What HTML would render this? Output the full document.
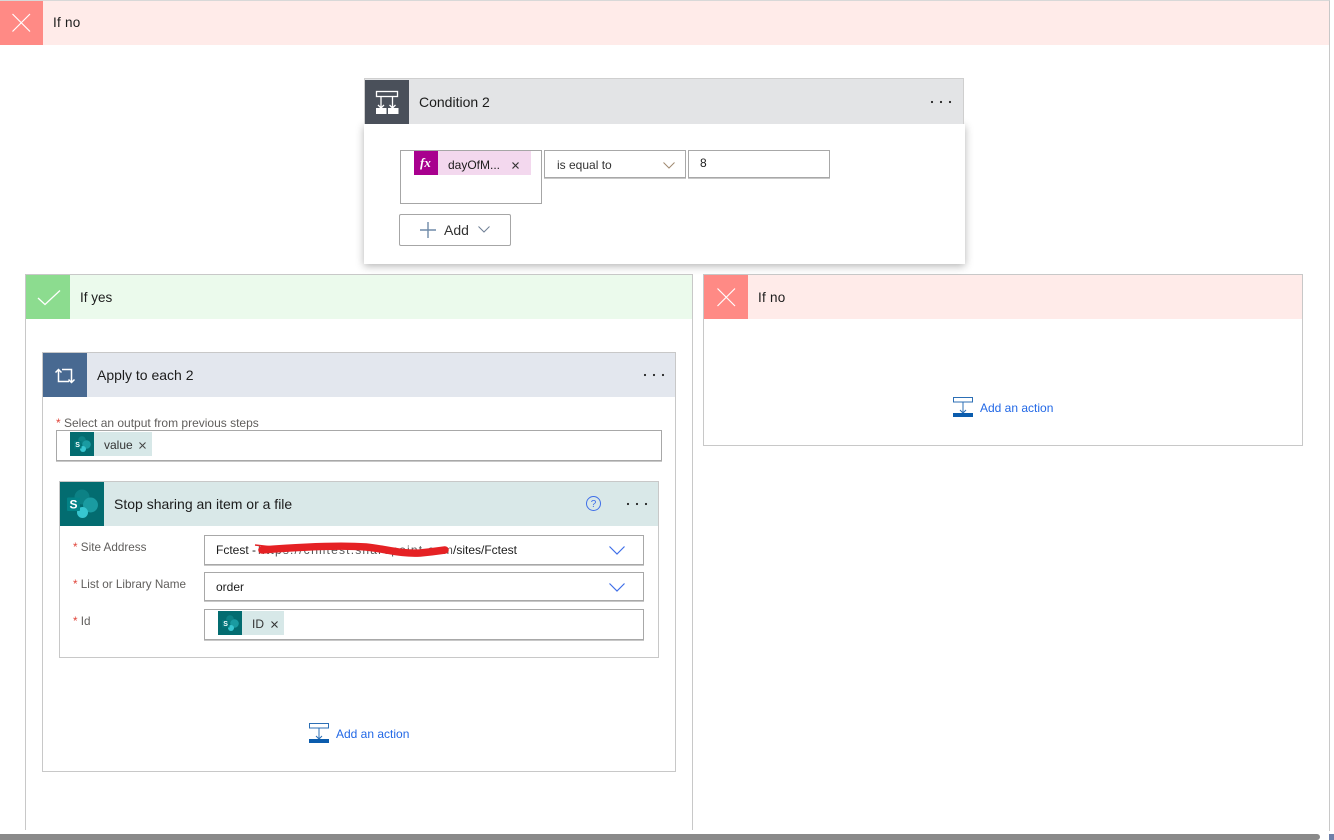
<!DOCTYPE html>
<html><head><meta charset="utf-8"><style>
html,body{margin:0;padding:0;width:1334px;height:840px;overflow:hidden;background:#fff;font-family:"Liberation Sans",sans-serif;color:#1c1c1c}
.a{position:absolute;box-sizing:border-box}
.t{position:absolute;white-space:nowrap;line-height:16px}
.b{position:absolute;box-sizing:border-box;border:1px solid #a8a8a8;box-shadow:0 1px 0 #c8c8c8;background:#fff}
.g{color:#605e5c;font-size:12px}
.h{font-size:11.7px}
.r{color:#e0453a}
.l{color:#2268e6;font-size:12px}
svg{position:absolute;overflow:visible}
</style></head><body>
<div class="a" style="left:0;top:0;width:1330px;height:831px;border-top:1px solid #d8d8d8;border-right:1px solid #c8c8c8"></div>
<div class="a" style="left:0;top:1px;width:1329px;height:44px;background:#ffebe9"></div>
<div class="a" style="left:0;top:1px;width:43px;height:44px;background:#ff8a85"></div>
<svg style="left:0;top:1px" width="43" height="44"><path d="M12.5 13L30 30.500M30 13L12.500 30.500" stroke="#fff" stroke-width="1.2" fill="none"/></svg>
<div class="t" style="left:53px;top:15px;font-size:13.5px;letter-spacing:.25px">If no</div>

<!-- Yes branch -->
<div class="a" style="left:25px;top:274px;width:668px;height:556px;border:1px solid #c8c8c8;border-bottom:0"></div>
<div class="a" style="left:26px;top:275px;width:666px;height:44px;background:#ebfaec"></div>
<div class="a" style="left:26px;top:275px;width:44px;height:44px;background:#8cdc8f"></div>
<svg style="left:26px;top:275px" width="44" height="44"><path d="M12 23L19 29.500L34 15.500" stroke="#fff" stroke-width="1.3" fill="none"/></svg>
<div class="t" style="left:80px;top:290px;font-size:13.5px">If yes</div>

<!-- No branch -->
<div class="a" style="left:703px;top:274px;width:600px;height:172px;border:1px solid #c8c8c8"></div>
<div class="a" style="left:704px;top:275px;width:598px;height:44px;background:#ffebe9"></div>
<div class="a" style="left:704px;top:275px;width:44px;height:44px;background:#ff8a85"></div>
<svg style="left:704px;top:275px" width="44" height="44"><path d="M13.5 13.500L31 31M31 13.500L13.500 31" stroke="#fff" stroke-width="1.2" fill="none"/></svg>
<div class="t" style="left:758px;top:290px;font-size:13.5px;letter-spacing:.25px">If no</div>
<svg style="left:953px;top:397px" width="21" height="21"><rect x=".5" y=".5" width="19" height="4.500" fill="none" stroke="#2c6fb5"/><path d="M10 5V16M7 13L10 16L13 13" stroke="#2c6fb5" fill="none"/><rect y="16" width="20" height="4" fill="#0b5cad"/></svg>
<div class="t l" style="left:980px;top:400px">Add an action</div>

<!-- Condition -->
<div class="a" style="left:364px;top:124px;width:601px;height:140px;background:#fff;box-shadow:0 2px 8px rgba(0,0,0,.3)"></div>
<div class="a" style="left:364px;top:78px;width:600px;height:46px;background:#e3e4e6;border:1px solid #cfcfcf;border-bottom:0"></div>
<div class="a" style="left:365px;top:80px;width:44px;height:44px;background:#4a505a"></div>
<svg style="left:365px;top:80px" width="44" height="44"><g stroke="#fff" fill="none" stroke-width="1.3"><rect x="11.500" y="11.500" width="21" height="5"/><path d="M16 17V28M13 25L16 28L19 25M27.500 17V28M24.500 25L27.500 28L30.500 25"/></g><rect x="11" y="28" width="10.500" height="6" fill="#fff"/><rect x="23" y="28" width="10.500" height="6" fill="#fff"/></svg>
<div class="t" style="left:419px;top:94px;font-size:14px">Condition 2</div>
<svg style="left:930px;top:100px" width="22" height="4"><circle cx="2" cy="2" r="1.1" fill="#222"/><circle cx="11" cy="2" r="1.1" fill="#222"/><circle cx="20" cy="2" r="1.1" fill="#222"/></svg>

<div class="a" style="left:400px;top:150px;width:142px;height:54px;border:1px solid #a6a6a6"></div>
<div class="a" style="left:414px;top:151px;width:117px;height:24px;background:#f3d8ee"></div>
<div class="a" style="left:414px;top:151px;width:24px;height:24px;background:#a8008e"></div>
<div class="t" style="left:420px;top:155px;font:italic bold 13px/16px 'Liberation Serif',serif;color:#fff">fx</div>
<div class="t" style="left:448px;top:157px;font-size:12px">dayOfM...</div>
<svg style="left:512px;top:162px" width="7" height="7"><path d="M.5.5L6.500 6.500M6.500.5L.5 6.500" stroke="#333" stroke-width="1.2"/></svg>
<div class="b" style="left:544px;top:150px;width:142px;height:28px"></div>
<div class="t" style="left:557px;top:157px;font-size:12px;color:#333">is equal to</div>
<svg style="left:663px;top:162px" width="12" height="7"><path d="M.5.5L6 6L11.500.5" stroke="#a08a70" fill="none"/></svg>
<div class="b" style="left:688px;top:150px;width:142px;height:28px"></div>
<div class="t" style="left:700px;top:155px;font-size:12px">8</div>
<div class="a" style="left:399px;top:214px;width:112px;height:32px;border:1px solid #a6a6a6;border-radius:2px;background:#fff"></div>
<svg style="left:420px;top:222px" width="16" height="16"><path d="M8 0V16M0 8H16" stroke="#6f8aa8" stroke-width="1.4"/></svg>
<div class="t" style="left:444px;top:222px;font-size:14px;color:#333">Add</div>
<svg style="left:478px;top:226px" width="12" height="7"><path d="M.5.5L6 6L11.500.5" stroke="#6f7f95" fill="none"/></svg>

<!-- Apply to each -->
<div class="a" style="left:42px;top:352px;width:634px;height:420px;border:1px solid #c8c8c8;background:#fff"></div>
<div class="a" style="left:43px;top:353px;width:632px;height:44px;background:#e3e7ee"></div>
<div class="a" style="left:43px;top:353px;width:44px;height:44px;background:#486991"></div>
<svg style="left:43px;top:353px" width="44" height="44"><path d="M15.500 16.500V28.500H26M12.500 19.500L15.500 16.500L18.500 19.500M19 16.500H28.500V29.500M25.500 26.500L28.500 29.500L31.500 26.500" stroke="#fff" stroke-width="1.5" fill="none"/></svg>
<div class="t" style="left:97px;top:367px;font-size:14px">Apply to each 2</div>
<svg style="left:643px;top:373px" width="22" height="4"><circle cx="2" cy="2" r="1.1" fill="#222"/><circle cx="11" cy="2" r="1.1" fill="#222"/><circle cx="20" cy="2" r="1.1" fill="#222"/></svg>
<div class="t g" style="left:56px;top:415px"><span class="r">*</span>&nbsp;Select an output from previous steps</div>
<div class="b" style="left:56px;top:430px;width:606px;height:31px"></div>
<div class="a" style="left:70px;top:432px;width:82px;height:24px;background:#d7e8e8"></div>
<div class="a" style="left:70px;top:432px;width:24px;height:24px;background:#036c70"></div>
<svg style="left:70px;top:432px" width="24" height="24"><circle cx="12" cy="8" r="3.800" fill="#0c8185"/><circle cx="16.500" cy="12.500" r="4.300" fill="#1a9ba1"/><circle cx="13" cy="17" r="3" fill="#37c6d0"/><rect x="4" y="9" width="7.500" height="7.500" fill="#03787c"/><text x="5.200" y="15" font-size="7" font-weight="700" fill="#fff" font-family="Liberation Sans">S</text></svg>
<div class="t" style="left:104px;top:437px;font-size:12px;color:#333">value</div>
<svg style="left:139px;top:442px" width="7" height="7"><path d="M.5.5L6.500 6.500M6.500.5L.5 6.500" stroke="#444"/></svg>

<!-- Stop sharing -->
<div class="a" style="left:59px;top:481px;width:600px;height:177px;border:1px solid #c8c8c8;background:#fff"></div>
<div class="a" style="left:60px;top:482px;width:598px;height:44px;background:#d9e8e8"></div>
<div class="a" style="left:60px;top:482px;width:44px;height:44px;background:#036c70"></div>
<svg style="left:60px;top:482px" width="44" height="44"><circle cx="22" cy="15" r="7.500" fill="#0c8185"/><circle cx="30.500" cy="23" r="7.500" fill="#1a9ba1"/><circle cx="22.500" cy="30.500" r="5.500" fill="#37c6d0"/><rect x="7" y="15.500" width="13" height="13.500" rx="1" fill="#038387"/><text x="9.500" y="26.500" font-size="12" font-weight="700" fill="#fff" font-family="Liberation Sans">S</text></svg>
<div class="t" style="left:114px;top:496px;font-size:14px">Stop sharing an item or a file</div>
<svg style="left:586px;top:496px" width="15" height="15"><circle cx="7.500" cy="7.500" r="7" fill="none" stroke="#3f6fe8" stroke-width="1"/><text x="7.500" y="11" font-size="10" text-anchor="middle" fill="#3f6fe8" font-family="Liberation Sans">?</text></svg>
<svg style="left:626px;top:502px" width="22" height="4"><circle cx="2" cy="2" r="1.1" fill="#222"/><circle cx="11" cy="2" r="1.1" fill="#222"/><circle cx="20" cy="2" r="1.1" fill="#222"/></svg>

<div class="t g h" style="left:73px;top:540px"><span class="r">*</span> Site Address</div>
<div class="b" style="left:204px;top:535px;width:440px;height:30px"></div>
<div class="t" style="left:216px;top:542px;font-size:12px">Fctest -</div>
<div class="t" style="left:258px;top:542px;font-size:12px;letter-spacing:1.2px;color:#555">https://cfmtest.sharepoint.com</div>
<div class="t" style="left:453px;top:542px;font-size:12px;background:#fff">/sites/Fctest</div>
<svg style="left:0;top:0" width="1" height="1"><path d="M262 550C300 547 340 545 366 547C386 549 400 554 420 553C430 552 438 551 445 550" stroke="#e52124" stroke-width="7.500" stroke-linecap="round" fill="none"/><path d="M255 545L290 549" stroke="#e52124" stroke-width="1.500" fill="none"/></svg>
<svg style="left:609px;top:546px" width="16" height="9"><path d="M.5.5L8 8L15.500.5" stroke="#3f6fe8" stroke-width="1.2" fill="none"/></svg>

<div class="t g h" style="left:73px;top:577px"><span class="r">*</span> List or Library Name</div>
<div class="b" style="left:204px;top:572px;width:440px;height:29px"></div>
<div class="t" style="left:216px;top:579px;font-size:12px">order</div>
<svg style="left:609px;top:583px" width="16" height="9"><path d="M.5.5L8 8L15.500.5" stroke="#3f6fe8" stroke-width="1.2" fill="none"/></svg>

<div class="t g h" style="left:73px;top:614px"><span class="r">*</span> Id</div>
<div class="b" style="left:204px;top:609px;width:440px;height:31px"></div>
<div class="a" style="left:218px;top:611px;width:66px;height:24px;background:#d7e8e8"></div>
<div class="a" style="left:218px;top:611px;width:24px;height:24px;background:#036c70"></div>
<svg style="left:218px;top:611px" width="24" height="24"><circle cx="12" cy="8" r="3.800" fill="#0c8185"/><circle cx="16.500" cy="12.500" r="4.300" fill="#1a9ba1"/><circle cx="13" cy="17" r="3" fill="#37c6d0"/><rect x="4" y="9" width="7.500" height="7.500" fill="#03787c"/><text x="5.200" y="15" font-size="7" font-weight="700" fill="#fff" font-family="Liberation Sans">S</text></svg>
<div class="t" style="left:252px;top:616px;font-size:12px;color:#333">ID</div>
<svg style="left:271px;top:621px" width="7" height="7"><path d="M.5.5L6.500 6.500M6.500.5L.5 6.500" stroke="#333" stroke-width="1.1"/></svg>

<svg style="left:309px;top:723px" width="21" height="21"><rect x=".5" y=".5" width="19" height="4.500" fill="none" stroke="#2c6fb5"/><path d="M10 5V16M7 13L10 16L13 13" stroke="#2c6fb5" fill="none"/><rect y="16" width="20" height="4" fill="#0b5cad"/></svg>
<div class="t l" style="left:336px;top:726px">Add an action</div>

<!-- scrollbar -->
<div class="a" style="left:0;top:834px;width:1320px;height:6px;background:#8a8a8a;border-radius:0 4px 4px 0"></div>
<div class="a" style="left:1329px;top:834px;width:5px;height:6px;background:#6f7fa8"></div>
</body></html>
